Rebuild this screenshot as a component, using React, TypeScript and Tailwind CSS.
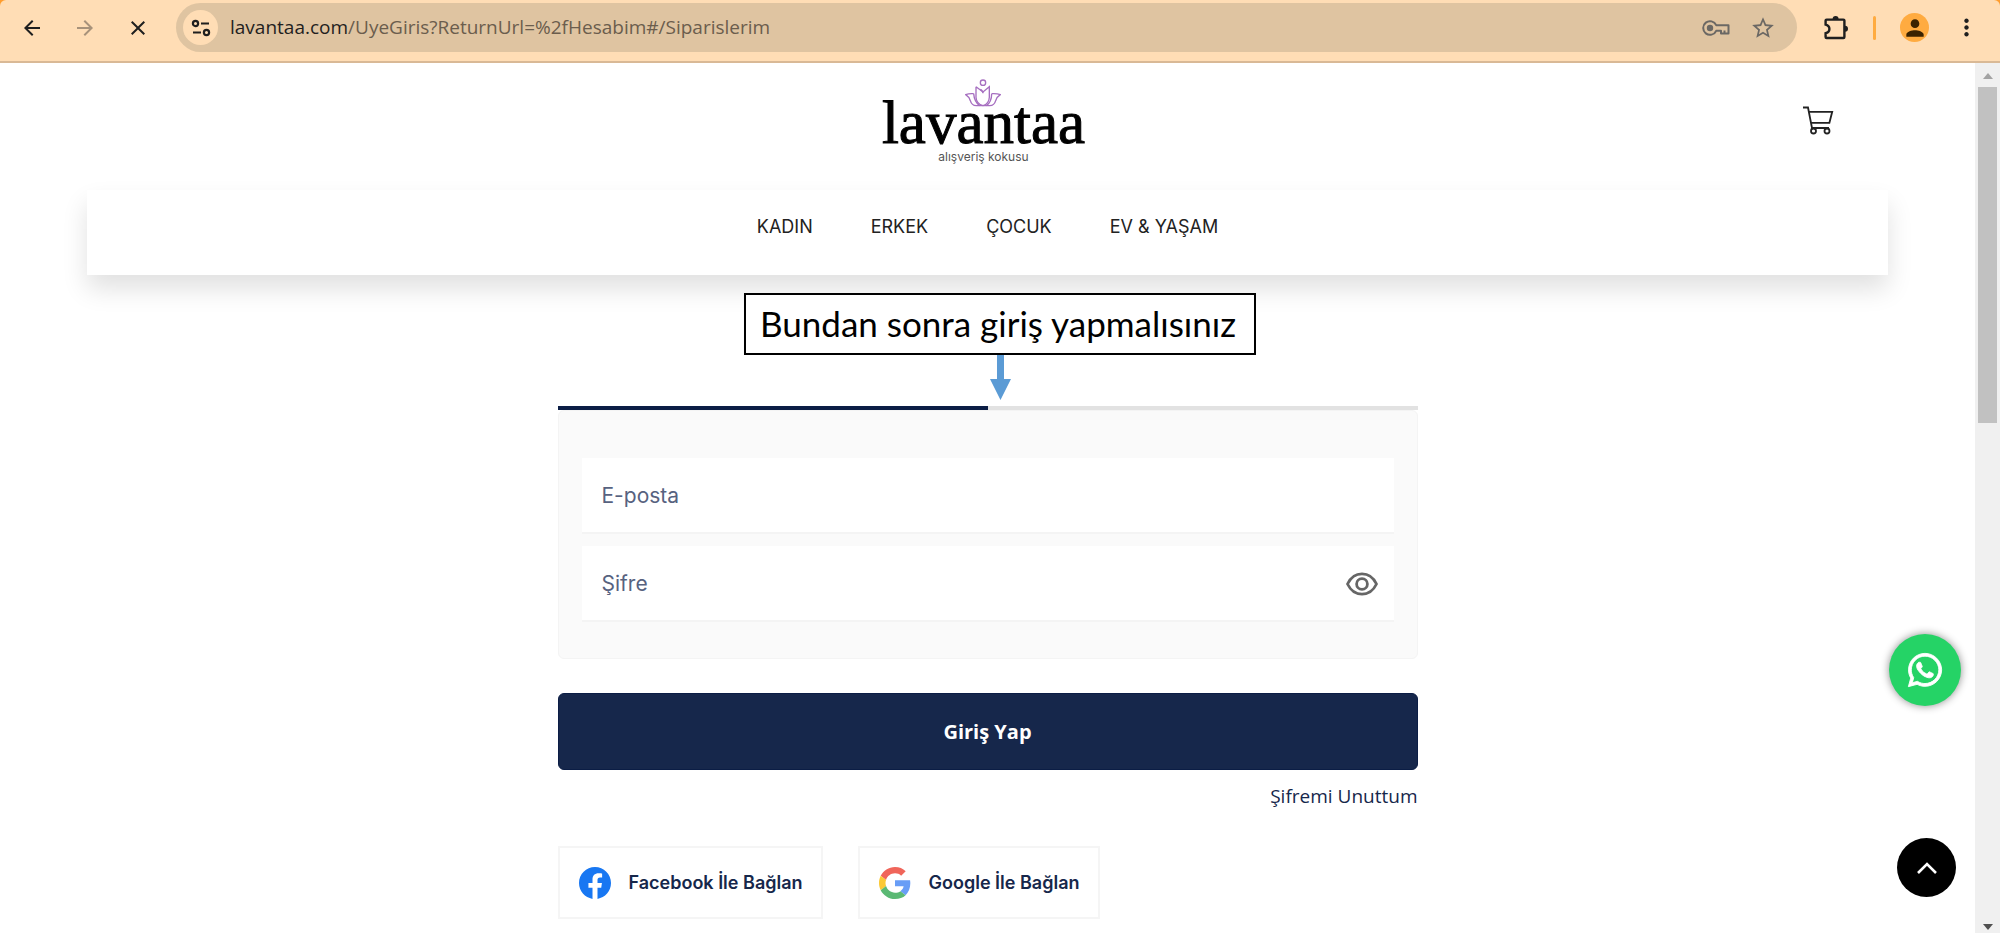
import { FaWhatsapp } from "react-icons/fa";
import { MdArrowBack, MdArrowForward, MdClose, MdMoreVert, MdPerson, MdStarBorder } from "react-icons/md";

const categories = ["KADIN", "ERKEK", "ÇOCUK", "EV & YAŞAM"];

function SiteInfoIcon() {
  return (
    <svg viewBox="0 0 20 20" className="size-5" fill="none" stroke="#1f1f1f" strokeWidth="2.2">
      <circle cx="4.5" cy="5.5" r="2.6" />
      <path d="M10 5.5h8M2 14.5h8" />
      <circle cx="15.5" cy="14.5" r="2.6" />
    </svg>
  );
}

function KeyIcon() {
  return (
    <svg viewBox="0 0 28 18" className="h-[18px] w-7" fill="none" stroke="#6b6864" strokeWidth="2">
      <path d="M14.2 6.2A6.8 6.8 0 1 0 14.2 11.8H19V14.5H26.5V6.2Z" strokeLinejoin="round" />
      <path d="M22.5 14.5V11.5" />
      <circle cx="8" cy="9" r="3.2" fill="#6b6864" stroke="none" />
    </svg>
  );
}

function PuzzleIcon() {
  return (
    <svg viewBox="0 0 26 26" className="size-[26px]" fill="none" stroke="#1f1f1f" strokeWidth="2.4">
      <path d="M3.6 4.6H20.4Q21.4 4.6 21.4 5.6V22Q21.4 23 20.4 23H3.6Q2.6 23 2.6 22V18.2Q6.4 17.4 6.4 14T2.6 9.6V5.6Q2.6 4.6 3.6 4.6Z" />
      <path d="M9.6 4a3 3 0 0 1 6 0ZM22 10.8a3 3 0 0 1 0 6Z" fill="#1f1f1f" stroke="none" />
    </svg>
  );
}

function CartIcon() {
  return (
    <svg viewBox="0 0 32 29" className="h-[29px] w-8" fill="none" stroke="#222" strokeWidth="1.8">
      <path d="M1 1.5H6L10 22H27" />
      <path d="M7 5.8H30.2L27.4 16.8H9" />
      <circle cx="11.5" cy="25" r="2.5" fill="#fff" />
      <circle cx="25" cy="25" r="2.5" fill="#fff" />
    </svg>
  );
}

function LotusIcon() {
  return (
    <svg viewBox="0 0 108 82" className="h-7 w-9" fill="none" stroke="#a66fc0" strokeWidth="4">
      <circle cx="54" cy="10" r="8" />
      <path d="M33 22V54Q34 74 54 79Q72 74 73 54V22L54 38L33 22" />
      <path d="M46 30Q54 34 54 42" />
      <path d="M26 43Q12 42 2 46Q12 52 16 64Q20 79 34 79H74Q88 79 92 64Q96 52 106 46Q96 42 80 43" />
      <path d="M26 43Q28 68 44 79M80 43Q80 68 64 79" />
    </svg>
  );
}

function EyeIcon() {
  return (
    <svg viewBox="0 0 32 24" className="h-6 w-8" fill="none" stroke="#666" strokeWidth="2.8">
      <path d="M1.5 12C8 -1.5 24 -1.5 30.5 12C24 25.5 8 25.5 1.5 12Z" strokeLinejoin="round" />
      <circle cx="16" cy="12" r="5.4" />
    </svg>
  );
}

function FacebookIcon() {
  return (
    <svg viewBox="0 0 24 24" className="size-8" fill="#1877f2">
      <path d="M24 12.073c0-6.627-5.373-12-12-12s-12 5.373-12 12c0 5.99 4.388 10.954 10.125 11.854v-8.385H7.078v-3.47h3.047V9.43c0-3.007 1.792-4.669 4.533-4.669 1.312 0 2.686.235 2.686.235v2.953H15.83c-1.491 0-1.956.925-1.956 1.874v2.25h3.328l-.532 3.47h-2.796v8.385C19.612 23.027 24 18.062 24 12.073z" />
    </svg>
  );
}

function GoogleIcon() {
  return (
    <svg viewBox="0 0 48 48" className="size-8">
      <path fill="#f0655a" d="M24 9.5c3.54 0 6.71 1.22 9.21 3.6l6.85-6.85C35.9 2.38 30.47 0 24 0 14.62 0 6.51 5.38 2.56 13.22l7.98 6.19C12.43 13.72 17.74 9.5 24 9.5z" />
      <path fill="#689df6" d="M46.98 24.55c0-1.57-.15-3.09-.38-4.55H24v9.02h12.94c-.58 2.96-2.26 5.48-4.78 7.18l7.73 6c4.51-4.18 7.09-10.36 7.09-17.65z" />
      <path fill="#fbc935" d="M10.53 28.59c-.48-1.45-.76-2.99-.76-4.59s.27-3.14.76-4.59l-7.98-6.19C.92 16.46 0 20.12 0 24s.92 7.54 2.56 10.78l7.97-6.19z" />
      <path fill="#5bb974" d="M24 48c6.48 0 11.93-2.13 15.89-5.81l-7.73-6c-2.15 1.45-4.92 2.3-8.16 2.3-6.26 0-11.57-4.22-13.47-9.91l-7.98 6.19C6.51 42.62 14.62 48 24 48z" />
    </svg>
  );
}

function BrowserBar() {
  return (
    <header className="bg-[#ff9d2e]">
      <div className="flex h-[63px] items-start rounded-t-md border-b-2 border-[#d9b996] bg-[#ffddb5] pt-[3px]">
        <div className="flex h-[49px] items-center gap-[29px] pl-5 text-[#1f1f1f]">
          <button aria-label="Geri">
            <MdArrowBack className="size-6" />
          </button>
          <button aria-label="İleri" className="text-[#a8927a]">
            <MdArrowForward className="size-6" />
          </button>
          <button aria-label="Durdur">
            <MdClose className="size-6" />
          </button>
        </div>
        <div className="ml-[26px] flex h-[49px] flex-1 items-center rounded-full bg-[#dfc4a1] pr-[21px] pl-[7px]">
          <button aria-label="Site bilgileri" className="flex size-[35px] items-center justify-center rounded-full bg-[#ffddb5]">
            <SiteInfoIcon />
          </button>
          <p className="ml-3 flex-1 font-['Open_Sans',sans-serif] text-[19px] text-[#6b5d4d]">
            <span className="text-[#1f1f1f]">lavantaa.com</span>/UyeGiris?ReturnUrl=%2fHesabim#/Siparislerim
          </p>
          <button aria-label="Şifreler">
            <KeyIcon />
          </button>
          <button aria-label="Yer işareti ekle" className="ml-5 text-[#6b6864]">
            <MdStarBorder className="size-[26px]" />
          </button>
        </div>
        <div className="flex h-[49px] items-center pr-5 pl-[26px]">
          <button aria-label="Uzantılar">
            <PuzzleIcon />
          </button>
          <span className="ml-6 h-6 w-[3px] rounded-full bg-[#ffab40]" />
          <button aria-label="Profil" className="ml-6 flex size-[29px] items-center justify-center rounded-full bg-[#ffab40] text-[#3a2200]">
            <MdPerson className="size-[26px]" />
          </button>
          <button aria-label="Menü" className="ml-6 text-[#1f1f1f]">
            <MdMoreVert className="size-[27px]" />
          </button>
        </div>
      </div>
    </header>
  );
}

function StoreHeader() {
  return (
    <div>
      <div className="grid h-[127px] grid-cols-[1fr_auto_1fr] items-start">
        <a href="#" aria-label="lavantaa" className="col-start-2 mt-4 flex flex-col items-center pr-2">
          <LotusIcon />
          <span className="-mt-3 font-['Liberation_Serif',serif] text-[61px] leading-[56px] text-black [-webkit-text-stroke:1px_black]">
            lavantaa
          </span>
          <span className="font-[Inter,sans-serif] text-xs leading-3 text-[#555]">alışveriş kokusu</span>
        </a>
        <button aria-label="Sepet" className="mt-[43px] mr-[141px] justify-self-end">
          <CartIcon />
        </button>
      </div>
      <nav className="mx-[87px] flex h-[85px] items-start justify-center gap-[58px] pt-[25px] font-[Inter,sans-serif] text-lg leading-6 text-[#222] shadow-[0_14px_24px_rgba(0,0,0,0.12)]">
        {categories.map((name) => (
          <a key={name} href="#">
            {name}
          </a>
        ))}
      </nav>
    </div>
  );
}

function Callout() {
  return (
    <div className="absolute top-[293px] left-1/2 flex -translate-x-1/2 flex-col items-center">
      <p className="border-2 border-black bg-white pr-[18px] pb-0.5 pl-3.5 font-[Lato,sans-serif] text-[35px] leading-[56px] whitespace-nowrap text-black">
        Bundan sonra giriş yapmalısınız
      </p>
      <svg viewBox="0 0 21 45" className="h-[45px] w-[21px]" fill="#5b9bd5">
        <path d="M7 0H14V24H21L10.5 45L0 24H7Z" />
      </svg>
    </div>
  );
}

function LoginForm() {
  return (
    <form className="mx-auto mt-[131px] w-[860px] max-w-full text-[#16274b]" onSubmit={(e) => e.preventDefault()}>
      <div className="flex h-1">
        <span className="flex-1 bg-[#0b1d45]" />
        <span className="flex-1 bg-[#e2e2e2]" />
      </div>
      <div className="flex flex-col gap-3 rounded-md border border-[#f4f4f4] bg-[#fafafa] px-[23px] pt-[47px] pb-9 font-[Inter,sans-serif]">
        <input
          type="email"
          aria-label="E-posta"
          placeholder="E-posta"
          className="h-[76px] w-full border-b-2 border-[#f4f4f4] bg-white px-5 text-[21px] placeholder:text-[#57627f]"
        />
        <div className="relative">
          <input
            type="password"
            aria-label="Şifre"
            placeholder="Şifre"
            className="h-[76px] w-full border-b-2 border-[#f4f4f4] bg-white px-5 text-[21px] placeholder:text-[#57627f]"
          />
          <button type="button" aria-label="Şifreyi göster" className="absolute inset-y-0 right-4">
            <EyeIcon />
          </button>
        </div>
      </div>
      <button className="mt-[34px] h-[77px] w-full rounded-md border border-[#0b1d45] bg-[#16274b] font-['Open_Sans',sans-serif] text-xl font-bold text-white">
        Giriş Yap
      </button>
      <div className="mt-3 text-right">
        <a href="#" className="font-['Open_Sans',sans-serif] text-[19px] leading-7">
          Şifremi Unuttum
        </a>
      </div>
      <div className="mt-9 flex gap-[35px] font-[Inter,sans-serif] text-lg font-semibold">
        <button type="button" className="flex h-[73px] items-center gap-[18px] border-2 border-[#f5f5f5] pr-[18px] pl-[19px]">
          <FacebookIcon />
          Facebook İle Bağlan
        </button>
        <button type="button" className="flex h-[73px] items-center gap-[18px] border-2 border-[#f5f5f5] pr-[18px] pl-[19px]">
          <GoogleIcon />
          Google İle Bağlan
        </button>
      </div>
    </form>
  );
}

function ScrollBar() {
  return (
    <div className="flex w-[25px] flex-col items-center justify-between bg-[#f0f0f0]">
      <div className="flex flex-col items-center">
        <svg viewBox="0 0 10 6" className="mt-[10px] h-1.5 w-2.5" fill="#a3a3a3">
          <path d="M0 6L5 0L10 6Z" />
        </svg>
        <div className="mt-2 h-[336px] w-[19px] bg-[#c1c1c1]" />
      </div>
      <svg viewBox="0 0 10 6" className="mb-[3px] h-1.5 w-2.5" fill="#505050">
        <path d="M0 0H10L5 6Z" />
      </svg>
    </div>
  );
}

export default function App() {
  return (
    <div className="relative flex min-h-screen flex-col bg-white">
      <BrowserBar />
      <div className="flex flex-1">
        <main className="flex-1">
          <StoreHeader />
          <LoginForm />
        </main>
        <ScrollBar />
      </div>
      <Callout />
      <a
        href="#"
        aria-label="WhatsApp"
        className="fixed right-[39px] bottom-[227px] flex size-[72px] items-center justify-center rounded-full bg-[#25d366] text-white shadow-[0_0_9px_rgba(0,0,0,0.45)]"
      >
        <FaWhatsapp className="size-[38px] stroke-current stroke-12" />
      </a>
      <button aria-label="Yukarı çık" className="fixed right-11 bottom-9 flex size-[59px] items-center justify-center rounded-full bg-black">
        <svg viewBox="0 0 20 12" className="h-3 w-5" fill="none" stroke="#fff" strokeWidth="2.6">
          <path d="M1 11L10 2L19 11" />
        </svg>
      </button>
    </div>
  );
}
